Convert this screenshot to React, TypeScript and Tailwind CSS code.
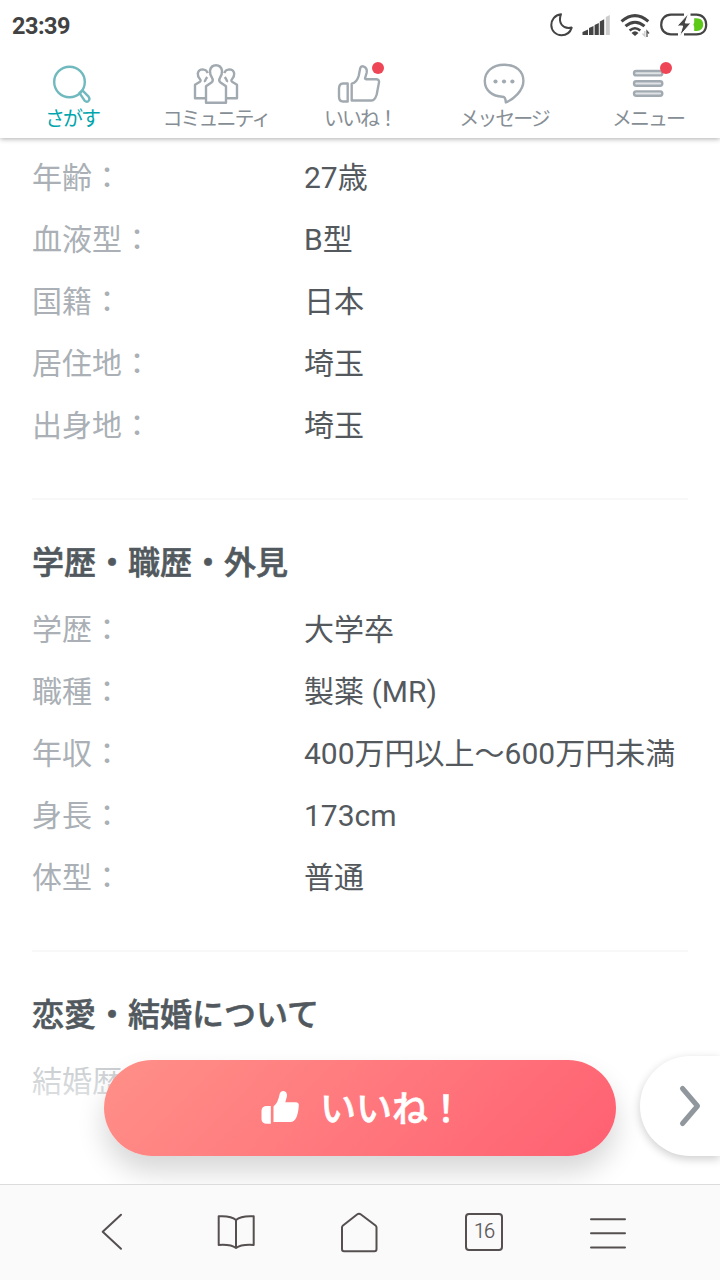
import type { ReactNode } from "react";

const profile = [
  ["年齢：", "27歳"],
  ["血液型：", "B型"],
  ["国籍：", "日本"],
  ["居住地：", "埼玉"],
  ["出身地：", "埼玉"],
];

const career = [
  ["学歴：", "大学卒"],
  ["職種：", "製薬 (MR)"],
  ["年収：", "400万円以上〜600万円未満"],
  ["身長：", "173cm"],
  ["体型：", "普通"],
];

function StatusBar() {
  return (
    <div className="flex h-[50px] shrink-0 items-center justify-between pl-3 pr-[10px]">
      <span className="pt-[2px] text-[23.5px] leading-[28px] font-bold tracking-[-0.5px] text-[#424242]">23:39</span>
      <svg className="h-[50px] w-[165px]" viewBox="545 0 165 50" fill="none">
        <path d="M561 14.2C554.5 15 551.3 20 551.3 25C551.3 31 556 35.2 561.5 35.2C566.5 35.2 570.3 32.2 571.7 27.6C562.5 29.6 557.8 22.5 561 14.2Z" stroke="#444" strokeWidth="2" strokeLinejoin="round" />
        <g fill="#444">
          <path d="M582.5 35V32L588 29.5V35Z" />
          <path d="M589 35V28L593.5 26V35Z" />
          <path d="M594.6 35V25L598.8 23V35Z" />
          <path d="M599.8 35V21.5L604.2 19.3V35Z" />
        </g>
        <path d="M605.8 35V17L609.8 15V35Z" fill="#ccc" />
        <g stroke="#444" strokeWidth="3">
          <path d="M621.5 21.3Q635 10 648.3 21.3" />
          <path d="M625.5 26.2Q635 18.2 644.5 26.2" />
          <path d="M629.6 30.5Q635 26 640.3 30.5" strokeWidth="2.6" />
        </g>
        <path d="M631.5 33Q635 29.5 638.5 33L635 36Z" fill="#444" />
        <path d="M644.8 31V36L642.5 33.5" stroke="#ccc" strokeWidth="1.3" />
        <path d="M647 37V31L649 33.5" stroke="#555" strokeWidth="1.3" />
        <path d="M684 14.7H671C665 14.7 661.2 19 661.2 24.7S665 34.3 671 34.3H678M690.5 14.7H696.5C702.5 14.7 706.2 19 706.2 24.7S702.5 34.3 696.5 34.3H684" stroke="#444" strokeWidth="2.2" />
        <path d="M688.5 13.5L677 26H682.7L679.7 36L691 23H685.2Z" fill="#444" stroke="#fff" strokeWidth="1" />
        <path d="M696.5 18.2C701 18.2 703.2 21 703.2 24.5S701 31 696.5 31H694.2V27L693.4 24.5L694.2 22.5V18.2Z" fill="#5bc916" />
      </svg>
    </div>
  );
}

function NavItem({ label, viewBox, active, badge, children }: { label: string; viewBox: string; active?: boolean; badge?: boolean; children: ReactNode }) {
  return (
    <div className={`flex w-[144px] flex-col items-center pt-[10px] ${active ? "text-[#00a5ad]" : "text-[#868e95]"}`}>
      <div className="relative">
        <svg className="h-[46px] w-[56px]" viewBox={viewBox} fill="none" stroke={active ? "#70babf" : "#a2aab1"} strokeWidth="2.4" strokeLinejoin="round">
          {children}
        </svg>
        {badge && <span className="absolute top-[2px] right-[4px] size-3 rounded-full bg-[#ef4657]" />}
      </div>
      <span className="-mt-px whitespace-nowrap text-[20px] leading-[28px] tracking-[-2px]">{label}</span>
    </div>
  );
}

function TopNav() {
  return (
    <nav className="flex h-[88px] shrink-0">
      <NavItem label="さがす" viewBox="44 60 56 46" active>
        <circle cx="69.5" cy="82" r="15.3" />
        <path d="M79.5 93L82.4 90.3L88.6 96.7Q90.3 99 88.6 100.8Q86.7 102.5 84.8 100.9Z" />
      </NavItem>
      <NavItem label="コミュニティ" viewBox="188 60 56 46">
        <path d="M205.3 98.2H195V84.8L200 81.7Q201.2 80.7 200 79.3Q197.6 76.5 197.8 73.5Q198.6 69.4 202.8 69.4Q206.5 69.6 207.8 73.2" />
        <path d="M226.7 98.2H237V84.8L232 81.7Q230.8 80.7 232 79.3Q234.4 76.5 234.2 73.5Q233.4 69.4 229.2 69.4Q225.5 69.6 224.2 73.2" />
        <path d="M205.2 82Q204.6 80.8 205.8 79.2L207.2 77M226.8 82Q227.4 80.8 226.2 79.2L224.8 77" />
        <path d="M206 102.7V86.3L211.8 82.2Q213.4 80.8 212.4 78.6Q209.6 74.5 210 70.7Q211 65.2 216 65.2T222 70.7Q222.4 74.5 219.6 78.6Q218.6 80.8 220.2 82.2L226 86.3V102.7Z" />
      </NavItem>
      <NavItem label="いいね！" viewBox="332 60 56 46" badge>
        <path d="M347.7 83.5H343Q339 83.5 339 89V96.5Q339 101.5 343 101.5H347.7Z" />
        <path d="M351.7 100.5V83.7Q357 82.4 358.8 75.5L360.2 68.2Q361 65.8 363.2 66.3Q367.5 67.5 366.7 72.5L365 78.5Q365.2 79.2 366.2 79.2H376.5Q379.5 79.6 379 82.4L376.7 94.5Q374.8 100.5 371.8 100.5Z" />
      </NavItem>
      <NavItem label="メッセージ" viewBox="476 60 56 46">
        <path d="M504.2 64.8C492.5 64.8 484.8 71.5 484.8 81S492.5 96.2 502.5 96.8Q505.6 96.5 505.8 102.5C513 99.5 523.4 91 523.4 81S515.8 64.8 504.2 64.8Z" />
        <g fill="#a2aab1" stroke="none">
          <circle cx="495.5" cy="81.5" r="2.1" />
          <circle cx="504" cy="81.5" r="2.1" />
          <circle cx="512.4" cy="81.5" r="2.1" />
        </g>
      </NavItem>
      <NavItem label="メニュー" viewBox="620 60 56 46" badge>
        <g fill="#dfe3e6">
          <rect x="634" y="71" width="28.3" height="4.4" rx="2.2" />
          <rect x="634" y="81.3" width="28.3" height="4.4" rx="2.2" />
          <rect x="634" y="91.4" width="28.3" height="4.4" rx="2.2" />
        </g>
      </NavItem>
    </nav>
  );
}

function Row({ label, value }: { label: string; value?: string }) {
  return (
    <div className="flex h-[62px] items-center pb-[2px] text-[30px]">
      <dt className="w-[272px] text-[#aab0b5]">{label}</dt>
      <dd className="whitespace-nowrap text-[#54595e]">{value}</dd>
    </div>
  );
}

function Section({ title, rows }: { title?: string; rows: string[][] }) {
  return (
    <section className="border-b-2 border-[#f8f8f8] pb-[41px]">
      {title && <Heading>{title}</Heading>}
      <dl>
        {rows.map(([label, value]) => (
          <Row key={label} label={label} value={value} />
        ))}
      </dl>
    </section>
  );
}

function Heading({ children }: { children: ReactNode }) {
  return <h2 className="flex h-[99px] items-center pt-[26px] text-[32px] font-medium text-[#51595e] [-webkit-text-stroke:0.6px_#51595e]">{children}</h2>;
}

function LikeBar() {
  return (
    <div className="absolute inset-x-0 bottom-0 flex h-[144px] items-start justify-between bg-linear-to-b from-white/20 to-white to-80% pl-[104px]">
      <button className="mt-5 flex h-24 w-[512px] items-center rounded-full bg-linear-[135deg] from-[#ff9088] to-[#ff6072] pl-[156px] text-white shadow-[0_16px_28px_rgba(0,0,0,0.16)]">
        <svg className="h-9 w-10" viewBox="260 1090 40 36" fill="currentColor">
          <path d="M270.8 1106H267Q261.5 1106 261.5 1111V1119Q261.5 1123.8 267 1123.8H270.8Z" />
          <path d="M273.5 1122V1106.5Q278 1103 279.5 1094.5Q280.2 1090.8 283.5 1090.9Q287.2 1091.5 287 1096L285.3 1102.3H295.5Q299.3 1102.3 298.8 1106Q297.5 1122 290.5 1122Z" />
        </svg>
        <span className="ml-[20px] whitespace-nowrap pt-[3px] text-[36px] leading-[48px] font-medium [-webkit-text-stroke:0.6px_white]">いいね！</span>
      </button>
      <button className="mt-4 h-[100px] w-20 rounded-l-full bg-white shadow-[0_3px_10px_rgba(0,0,0,0.2)]">
        <svg className="h-[100px] w-20" viewBox="640 1056 80 100" fill="none" stroke="#90979d" strokeWidth="5" strokeLinecap="round" strokeLinejoin="round">
          <path d="M682.5 1088.5L697.5 1106L682.5 1123.5" />
        </svg>
      </button>
    </div>
  );
}

function ToolIcon({ viewBox, children }: { viewBox: string; children: ReactNode }) {
  return (
    <svg className="h-[95px] w-[124px]" viewBox={viewBox} fill="none" stroke="#554f50" strokeWidth="2" strokeLinecap="round" strokeLinejoin="round">
      {children}
    </svg>
  );
}

function BrowserBar() {
  return (
    <footer className="flex h-24 shrink-0 border-t border-[#dcdcdc] bg-[#fafafa] pl-[50px]">
      <ToolIcon viewBox="50 1185 124 95">
        <path d="M121 1214.7L102.7 1231.7L121 1248.7" />
      </ToolIcon>
      <ToolIcon viewBox="174 1185 124 95">
        <path d="M236 1220Q231 1215.5 218.7 1216.3V1245Q231 1244.2 236 1248Q241 1244.2 253.7 1245V1216.3Q241 1215.5 236 1220V1248" />
      </ToolIcon>
      <ToolIcon viewBox="298 1185 124 95">
        <path d="M344 1251.2H374.5Q376.5 1251.2 376.5 1249V1227.5Q376.5 1226.3 375.5 1225.5L361 1214.5Q359 1213 357 1214.5L343 1225.5Q342 1226.3 342 1227.5V1249Q342 1251.2 344 1251.2Z" />
      </ToolIcon>
      <div className="flex h-[94px] w-[124px] items-center justify-center">
        <span className="flex size-[38px] items-center justify-center rounded-[4px] border-2 border-[#554f50] pb-[3px] text-[20px] leading-none font-light tracking-[-1px] text-[#554f50] [-webkit-text-stroke:0.2px_#554f50]">16</span>
      </div>
      <ToolIcon viewBox="546 1185 124 95">
        <path d="M591 1219.3H625M591 1233.3H625M591 1247.5H625" />
      </ToolIcon>
    </footer>
  );
}

export default function App() {
  return (
    <div className="flex h-[1280px] w-[720px] flex-col overflow-hidden bg-white font-['Roboto','Noto_Sans_CJK_JP',sans-serif]" lang="ja">
      <header className="relative z-10 bg-white shadow-[0_1px_5px_rgba(0,0,0,0.32)]">
        <StatusBar />
        <TopNav />
      </header>
      <main className="relative min-h-0 flex-1 overflow-hidden px-8 pt-[9px]">
        <Section rows={profile} />
        <Section title="学歴・職歴・外見" rows={career} />
        <Heading>恋愛・結婚について</Heading>
        <dl>
          <Row label="結婚歴：" />
        </dl>
        <LikeBar />
      </main>
      <BrowserBar />
    </div>
  );
}
